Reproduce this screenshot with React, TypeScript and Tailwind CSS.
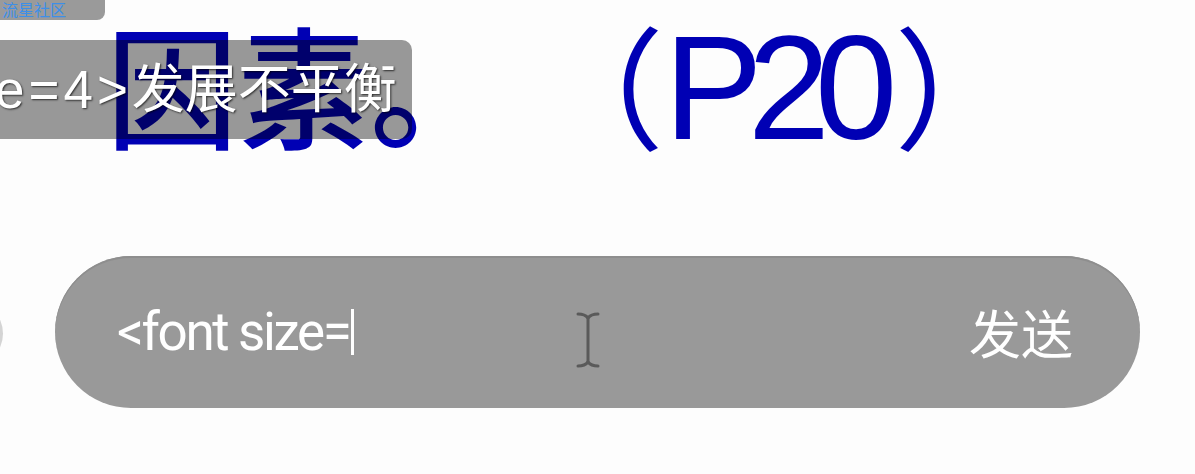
import React from "react";

const IBeam = () => (
  <svg width="26" height="58" viewBox="0 0 26 58" fill="none" stroke="#5a5a5a" strokeWidth="3" strokeLinecap="round">
    <path d="M3 3 Q10 3 13 7 Q16 3 23 3" />
    <path d="M13 7 V51" />
    <path d="M3 55 Q10 55 13 51 Q16 55 23 55" />
  </svg>
);

const App = () => {
  return (
    <div className="relative w-[1195px] h-[474px] overflow-hidden bg-[#fdfdfd]">
      {/* tag en haut à gauche */}
      <div className="absolute left-0 top-0 w-[105px] h-[20px] bg-[#9a9a9a] rounded-br-[8px] overflow-hidden">
        <span className="block pl-[2px] -mt-[1px] text-[16px] leading-[20px] text-[#3d8fe8] font-['Noto_Sans_CJK_SC',sans-serif]">
          流星社区
        </span>
      </div>

      {/* titre */}
      <div className="flex items-baseline pl-[106px] pt-[14px] h-[170px] text-[#0000b4] leading-none">
        <span className="text-[132px] font-medium font-['Noto_Sans_CJK_SC',sans-serif]">因素。</span>
        <span className="text-[132px] font-['Noto_Sans_CJK_SC',sans-serif] ml-[30px]">（</span>
        <span className="text-[148px] tracking-[-15px] font-['Liberation_Sans',sans-serif]">P20</span>
        <span className="text-[132px] font-['Noto_Sans_CJK_SC',sans-serif] ml-[12px]">）</span>
      </div>

      {/* danmaku */}
      <div className="absolute left-0 top-[40px] w-[412px] h-[99px] rounded-r-[10px] bg-black/40 overflow-hidden">
        <span className="absolute left-[-5px] top-[19px] whitespace-nowrap text-[53px] leading-none text-white [text-shadow:1px_1px_2px_rgba(0,0,0,0.7)]">
          <span className="tracking-[4px] font-['Liberation_Sans',sans-serif]">e=4&gt;</span>
          <span className="font-['Noto_Sans_CJK_SC',sans-serif]">发展不平衡</span>
        </span>
      </div>

      {/* cercle coupé à gauche */}
      <div className="absolute left-[-64px] top-[300px] w-[67px] h-[67px] rounded-full bg-[#d4d4d4]" />

      {/* barre de saisie */}
      <div className="ml-[55px] mt-[86px] w-[1085px] h-[152px] rounded-full bg-[#999999] shadow-[inset_0_2px_0_#8e8e8e] flex items-center pl-[62px] pr-[67px]">
        <div className="flex items-center flex-1">
          <span className="text-[53px] leading-none text-white tracking-[-0.045em] font-['Roboto',sans-serif]">
            &lt;font size=
          </span>
          <span className="w-[3px] h-[46px] bg-white ml-[2px]" />
        </div>
        <span className="text-[52px] leading-none text-white font-['Noto_Sans_CJK_SC',sans-serif]">发送</span>
      </div>

      {/* curseur */}
      <div className="absolute left-[575px] top-[311px]">
        <IBeam />
      </div>
    </div>
  );
};

export default App;
